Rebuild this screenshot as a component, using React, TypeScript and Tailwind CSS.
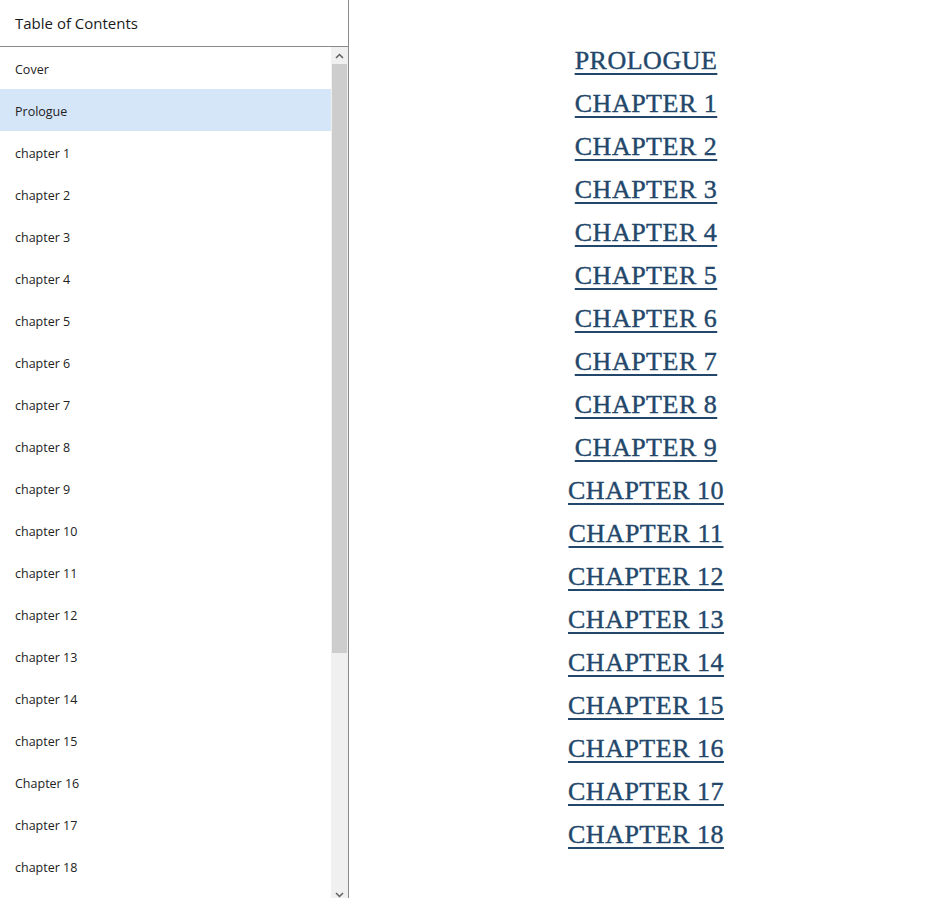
import React from 'react';

const items = [
  'Cover',
  'Prologue',
  'chapter 1',
  'chapter 2',
  'chapter 3',
  'chapter 4',
  'chapter 5',
  'chapter 6',
  'chapter 7',
  'chapter 8',
  'chapter 9',
  'chapter 10',
  'chapter 11',
  'chapter 12',
  'chapter 13',
  'chapter 14',
  'chapter 15',
  'Chapter 16',
  'chapter 17',
  'chapter 18',
];

const headings = [
  'PROLOGUE',
  ...Array.from({ length: 18 }, (_, i) => `CHAPTER ${i + 1}`),
];

const App: React.FC = () => {
  return (
    <div className="flex h-[898px] w-[939px] overflow-hidden bg-white">
      <aside className="flex w-[349px] shrink-0 flex-col border-r border-[#8a8a8a] font-['Open_Sans',sans-serif]">
        <div className="flex h-[47px] shrink-0 items-center border-b border-[#8a8a8a] pl-[15px] text-[15px] text-[#1a1a1a]">
          Table of Contents
        </div>
        <div className="flex min-h-0 flex-1">
          <ul className="flex-1 overflow-hidden">
            {items.map((item) => (
              <li
                key={item}
                className={`flex h-[42px] items-center pl-[15px] pt-[5px] text-[12.5px] text-[#222] ${
                  item === 'Prologue' ? 'bg-[#d5e6f8]' : ''
                }`}
              >
                {item}
              </li>
            ))}
          </ul>
          <div className="flex w-[17px] shrink-0 flex-col bg-[#f0f0f0]">
            <div className="flex h-[17px] items-center justify-center">
              <svg width="9" height="6" viewBox="0 0 9 6" fill="none">
                <path d="M1 5 L4.5 1.5 L8 5" stroke="#606060" strokeWidth="1.5" />
              </svg>
            </div>
            <div className="mx-[1px] h-[589px] bg-[#cdcdcd]" />
            <div className="flex-1" />
            <div className="flex h-[10px] items-end justify-center">
              <svg width="9" height="6" viewBox="0 0 9 6" fill="none">
                <path d="M1 1 L4.5 4.5 L8 1" stroke="#606060" strokeWidth="1.5" />
              </svg>
            </div>
          </div>
        </div>
      </aside>
      <main className="flex flex-1 flex-col items-center pl-[4px] pt-[42px] font-['Liberation_Serif',serif]">
        {headings.map((h) => (
          <a
            key={h}
            href="#"
            className="h-[43px] text-[26px] leading-[38px] tracking-[0.5px] text-[#23476a] underline decoration-[2px] underline-offset-[4px] [-webkit-text-stroke:0.4px_#23476a]"
          >
            {h}
          </a>
        ))}
      </main>
    </div>
  );
};

export default App;
